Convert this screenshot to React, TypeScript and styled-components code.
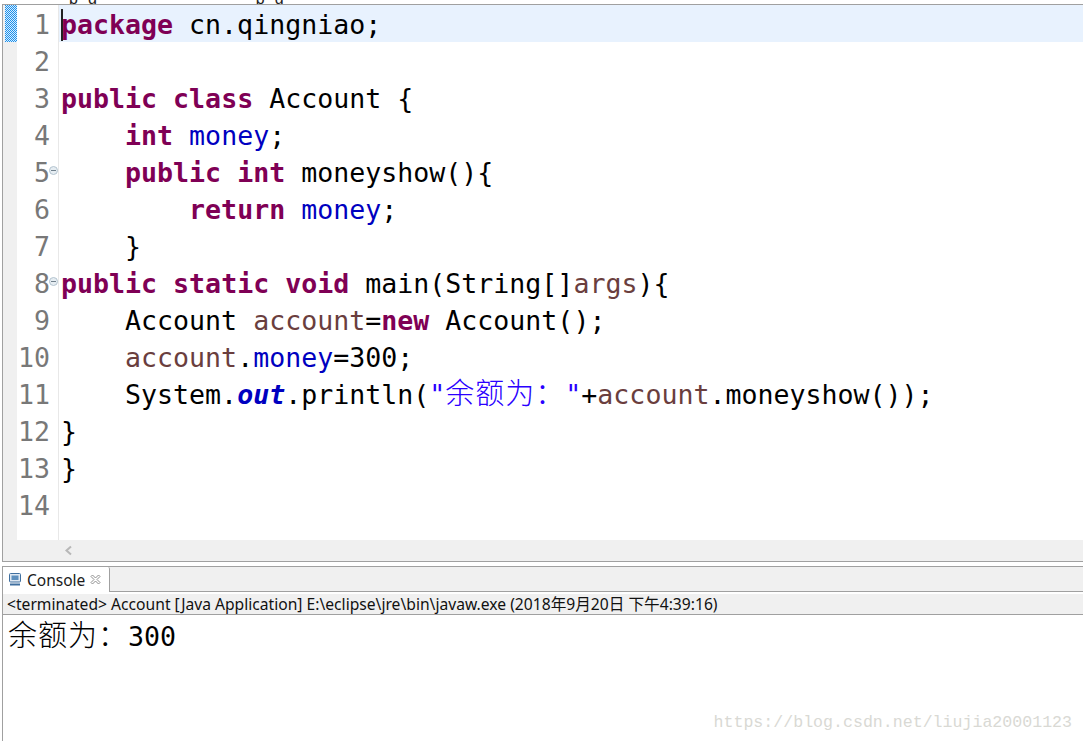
import styled, { createGlobalStyle } from "styled-components";

const GlobalStyle = createGlobalStyle`
  html, body {
    margin: 0;
    padding: 0;
    background: #fff;
  }
`;

const Window = styled.div`
  width: 1083px;
  height: 741px;
  overflow: hidden;
  display: flex;
  flex-direction: column;
  background: #fff;
`;

const TopSliver = styled.div`
  height: 4px;
  flex: none;
  overflow: hidden;
  display: flex;
  align-items: flex-end;
  gap: 159px;
  padding-left: 69px;
  background: #fff;
`;

const ClippedCrumb = styled.span`
  display: flex;
  gap: 10px;
  margin-bottom: 1px;
  font: 16px/8px "Liberation Sans", sans-serif;
  color: #222;
`;

const EditorFrame = styled.div`
  height: 558px;
  flex: none;
  margin-left: 2px;
  border: 1px solid #a0a0a0;
  border-right: none;
  display: flex;
  flex-direction: column;
  box-sizing: border-box;
`;

const EditorBody = styled.div`
  flex: 1;
  display: flex;
  min-height: 0;
`;

const Ruler = styled.div`
  width: 14px;
  flex: none;
  background: #f0f0f0;
`;

const ChangeMark = styled.div`
  width: 12px;
  height: 37px;
  margin-left: 2px;
  background-color: #1e90ea;
  background-image: repeating-conic-gradient(#d8eeff 0 25%, #1e90ea 0 50%);
  background-size: 2px 2px;
`;

const Gutter = styled.div`
  width: 41px;
  flex: none;
  border-right: 1px solid #e8e8e8;
  box-sizing: content-box;
`;

const LineNo = styled.div`
  height: 37px;
  position: relative;
  padding-right: 8px;
  text-align: right;
  font: 26.6px/39px "DejaVu Sans Mono", monospace;
  color: #787878;
`;

const FoldMark = styled.span`
  position: absolute;
  right: 0;
  top: 13px;
  width: 7px;
  height: 7px;
  border: 1px solid #b4c4d0;
  border-radius: 50%;
  background: #e6edf2;
  &::after {
    content: "";
    position: absolute;
    left: 1px;
    right: 1px;
    top: 3px;
    height: 1px;
    background: #70808c;
  }
`;

const Code = styled.div`
  flex: 1;
  min-width: 0;
`;

const CodeLine = styled.div<{ $current?: boolean }>`
  height: 37px;
  padding-left: 2px;
  position: relative;
  white-space: pre;
  font: 26.6px/39px "DejaVu Sans Mono", monospace;
  color: #000;
  background: ${({ $current }) => ($current ? "#e8f2fe" : "transparent")};
`;

const Caret = styled.span`
  position: absolute;
  left: 2px;
  top: 4px;
  width: 2px;
  height: 32px;
  background: #222;
`;

const Keyword = styled.span`
  font-weight: bold;
  color: #7f0055;
`;

const Field = styled.span`
  color: #0000c0;
`;

const StaticField = styled.span`
  color: #0000c0;
  font-weight: bold;
  font-style: italic;
`;

const Local = styled.span`
  color: #6a3e3e;
`;

const Str = styled.span`
  color: #2a00ff;
`;

const Cjk = styled.span`
  font-family: "Noto Sans CJK SC", sans-serif;
  font-weight: 300;
  font-size: 29px;
  line-height: 0;
  letter-spacing: 1px;
`;

const HScroll = styled.div`
  height: 21px;
  flex: none;
  background: #f0f0f0;
  display: flex;
  align-items: center;
  padding-left: 61px;
`;

const SectionGap = styled.div`
  height: 4px;
  flex: none;
`;

const ConsoleFrame = styled.div`
  flex: 1;
  margin-left: 2px;
  border-left: 1px solid #a0a0a0;
  border-top: 1px solid #a0a0a0;
  display: flex;
  flex-direction: column;
  min-height: 0;
`;

const TabBar = styled.div`
  height: 24px;
  flex: none;
  background: #f0f0f0;
  border-bottom: 1px solid #a0a0a0;
  display: flex;
`;

const Tab = styled.div`
  width: 107px;
  height: 25px;
  box-sizing: border-box;
  background: #fff;
  border-right: 1px solid #a0a0a0;
  border-top-right-radius: 2px;
  display: flex;
  align-items: center;
  gap: 5px;
  padding-left: 5px;
  font: 15.5px "Noto Sans", sans-serif;
  color: #1a1a1a;
`;

const InfoBar = styled.div`
  height: 20px;
  flex: none;
  margin-top: 2px;
  background: #f0f0f0;
  border-bottom: 1px solid #a0a0a0;
  padding-left: 4px;
  white-space: pre;
  font: 15.65px/21px "Noto Sans", "Noto Sans CJK SC", sans-serif;
  color: #111;
`;

const Output = styled.div`
  flex: 1;
  position: relative;
  padding-left: 5px;
  white-space: pre;
  font: 26.6px/43px "DejaVu Sans Mono", monospace;
  color: #000;
`;

const Watermark = styled.div`
  position: absolute;
  right: 11px;
  bottom: 6px;
  font: 16.6px/24px "Liberation Mono", monospace;
  color: #d9d9d4;
`;

const lineNumbers = Array.from({ length: 14 }, (_, i) => i + 1);
const foldLines = [5, 8];

export default function App() {
  return (
    <Window>
      <GlobalStyle />
      <TopSliver>
        <ClippedCrumb>
          <span>p</span>
          <span>g</span>
        </ClippedCrumb>
        <ClippedCrumb>
          <span>p</span>
          <span>g</span>
        </ClippedCrumb>
      </TopSliver>
      <EditorFrame>
        <EditorBody>
          <Ruler>
            <ChangeMark />
          </Ruler>
          <Gutter>
            {lineNumbers.map((n) => (
              <LineNo key={n}>
                {n}
                {foldLines.includes(n) && <FoldMark />}
              </LineNo>
            ))}
          </Gutter>
          <Code>
            <CodeLine $current>
              <Caret />
              <Keyword>package</Keyword> cn.qingniao;
            </CodeLine>
            <CodeLine />
            <CodeLine>
              <Keyword>public</Keyword> <Keyword>class</Keyword> Account {"{"}
            </CodeLine>
            <CodeLine>
              {"    "}
              <Keyword>int</Keyword> <Field>money</Field>;
            </CodeLine>
            <CodeLine>
              {"    "}
              <Keyword>public</Keyword> <Keyword>int</Keyword> moneyshow(){"{"}
            </CodeLine>
            <CodeLine>
              {"        "}
              <Keyword>return</Keyword> <Field>money</Field>;
            </CodeLine>
            <CodeLine>{"    }"}</CodeLine>
            <CodeLine>
              <Keyword>public</Keyword> <Keyword>static</Keyword> <Keyword>void</Keyword> main(String[]
              <Local>args</Local>){"{"}
            </CodeLine>
            <CodeLine>
              {"    "}Account <Local>account</Local>=<Keyword>new</Keyword> Account();
            </CodeLine>
            <CodeLine>
              {"    "}
              <Local>account</Local>.<Field>money</Field>=300;
            </CodeLine>
            <CodeLine>
              {"    "}System.<StaticField>out</StaticField>.println(
              <Str>
                "<Cjk>余额为：</Cjk>"
              </Str>
              +<Local>account</Local>.moneyshow());
            </CodeLine>
            <CodeLine>{"}"}</CodeLine>
            <CodeLine>{"}"}</CodeLine>
            <CodeLine />
          </Code>
        </EditorBody>
        <HScroll>
          <svg width="9" height="11" viewBox="0 0 9 11" fill="none">
            <path d="M7 1.5 2.5 5.5 7 9.5" stroke="#b8b8b8" strokeWidth="2" />
          </svg>
        </HScroll>
      </EditorFrame>
      <SectionGap />
      <ConsoleFrame>
        <TabBar>
          <Tab>
            <svg width="14" height="15" viewBox="0 0 14 15">
              <rect x="1.5" y="1.5" width="11" height="8.5" rx="1" fill="#dfe8f2" stroke="#3f6f9f" />
              <rect x="3.5" y="3.5" width="7" height="4.5" fill="#5d8fbd" />
              <rect x="2" y="11.5" width="10" height="2" fill="#3f6f9f" />
            </svg>
            Console
            <svg width="11" height="11" viewBox="0 0 11 11" fill="none">
              <path
                d="M1 2.5 2.5 1 5.5 4 8.5 1 10 2.5 7 5.5 10 8.5 8.5 10 5.5 7 2.5 10 1 8.5 4 5.5Z"
                stroke="#8f8f8f"
                strokeWidth="1"
              />
            </svg>
          </Tab>
        </TabBar>
        <InfoBar>{"<terminated> Account [Java Application] E:\\eclipse\\jre\\bin\\javaw.exe (2018年9月20日 下午4:39:16)"}</InfoBar>
        <Output>
          <Cjk>余额为：</Cjk>300
          <Watermark>https://blog.csdn.net/liujia20001123</Watermark>
        </Output>
      </ConsoleFrame>
    </Window>
  );
}
